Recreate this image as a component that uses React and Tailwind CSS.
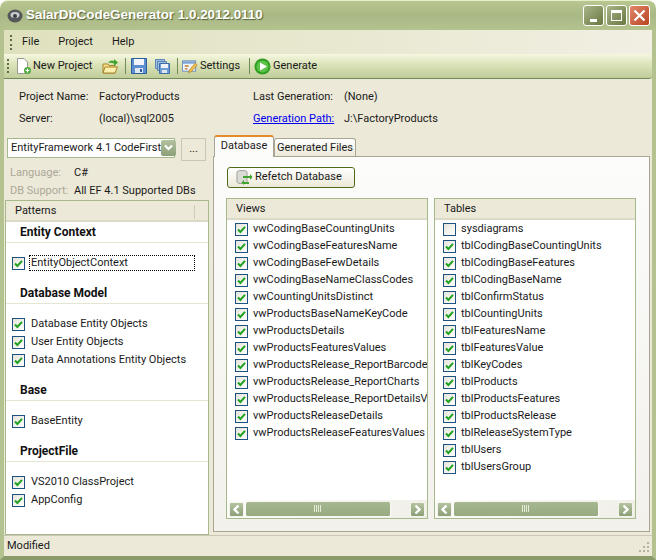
import React from "react";

const views = [
  "vwCodingBaseCountingUnits",
  "vwCodingBaseFeaturesName",
  "vwCodingBaseFewDetails",
  "vwCodingBaseNameClassCodes",
  "vwCountingUnitsDistinct",
  "vwProductsBaseNameKeyCode",
  "vwProductsDetails",
  "vwProductsFeaturesValues",
  "vwProductsRelease_ReportBarcode",
  "vwProductsRelease_ReportCharts",
  "vwProductsRelease_ReportDetailsView",
  "vwProductsReleaseDetails",
  "vwProductsReleaseFeaturesValues",
];

const tables = [
  "tblCodingBaseCountingUnits",
  "tblCodingBaseFeatures",
  "tblCodingBaseName",
  "tblConfirmStatus",
  "tblCountingUnits",
  "tblFeaturesName",
  "tblFeaturesValue",
  "tblKeyCodes",
  "tblProducts",
  "tblProductsFeatures",
  "tblProductsRelease",
  "tblReleaseSystemType",
  "tblUsers",
  "tblUsersGroup",
];

function Check({ checked = true }) {
  return (
    <span className="flex h-[13px] w-[13px] shrink-0 items-center justify-center border border-[#1c5180] bg-gradient-to-br from-[#e6e4da] to-[#ffffff]">
      {checked && (
        <svg width="9" height="9" viewBox="0 0 9 9">
          <path d="M1 4.5 L3.4 7 L8 1.8" fill="none" stroke="#21a121" strokeWidth="2" />
        </svg>
      )}
    </span>
  );
}

function Grip() {
  return (
    <span className="flex h-[15px] w-[3px] shrink-0 flex-col justify-between">
      <span className="h-[2px] w-[2px] bg-[#5f6b45]" />
      <span className="h-[2px] w-[2px] bg-[#5f6b45]" />
      <span className="h-[2px] w-[2px] bg-[#5f6b45]" />
      <span className="h-[2px] w-[2px] bg-[#5f6b45]" />
    </span>
  );
}

function Sep() {
  return <span className="block h-[16px] w-px shrink-0 bg-[#6f8a5b]" />;
}

function WinButton({ close, children }) {
  return (
    <span
      className={
        "flex h-[21px] w-[21px] items-center justify-center rounded-[3px] border border-white " +
        (close
          ? "bg-gradient-to-br from-[#e0876a] to-[#b8421d]"
          : "bg-gradient-to-br from-[#a9b68a] to-[#69773f]")
      }
    >
      {children}
    </span>
  );
}

function ScrollBtn({ dir }) {
  return (
    <span className="flex h-[15px] w-[15px] shrink-0 items-center justify-center rounded-[2px] border border-[#f4f4ec] bg-gradient-to-b from-[#b4c3a0] to-[#8ca078]">
      <svg width="9" height="11" viewBox="0 0 9 11">
        <path
          d={dir === "left" ? "M6.5 1.5 L2.5 5.5 L6.5 9.5" : "M2.5 1.5 L6.5 5.5 L2.5 9.5"}
          fill="none"
          stroke="#ffffff"
          strokeWidth="2.4"
        />
      </svg>
    </span>
  );
}

function ListPanel({ title, children }) {
  return (
    <div className="flex h-[321px] w-[202px] flex-col overflow-hidden border border-[#a5b98d] bg-white">
      <div className="flex h-[21px] shrink-0 items-center border-b-2 border-[#dcd9c6] bg-[#ece9d8] pl-[9px] pt-px">
        {title}
      </div>
      <div className="min-h-0 flex-1 overflow-hidden pl-[8px] pt-px">{children}</div>
      <div className="flex h-[18px] shrink-0 items-center gap-[2px] bg-gradient-to-r from-[#fbfbf8] to-[#f0efe8] px-[2px]">
        <ScrollBtn dir="left" />
        <span className="flex h-[15px] w-[145px] items-center justify-center rounded-[2px] border-b border-r border-[#f8f8f0] bg-gradient-to-b from-[#a6b78f] to-[#97aa80]">
          <span className="h-[7px] w-[8px] bg-[repeating-linear-gradient(90deg,#e6ecd8_0,#e6ecd8_1px,transparent_1px,transparent_2px)]" />
        </span>
        <span className="flex-1" />
        <ScrollBtn dir="right" />
      </div>
    </div>
  );
}

function Row({ label, checked = true }) {
  return (
    <div className="flex h-[17px] items-center gap-[5px] whitespace-nowrap">
      <Check checked={checked} />
      <span>{label}</span>
    </div>
  );
}

function Section({ title, items, focusFirst }) {
  return (
    <div className="pb-[11px]">
      <div className="flex h-[21px] items-center border-b border-[#e4e6d2] pl-[14px] text-[12px] font-bold text-[#111]">
        {title}
      </div>
      <div className="pt-[11px]">
        {items.map((it) => (
          <div key={it} className="flex h-[18px] items-center gap-[4px] pl-[6px]">
            <Check />
            <span className={focusFirst ? "w-[166px] border border-dotted border-black pl-[1px] leading-[14px]" : "pl-[2px]"}>
              {it}
            </span>
          </div>
        ))}
      </div>
    </div>
  );
}

export default function App() {
  return (
    <div className="flex h-[560px] w-[656px] flex-col overflow-hidden rounded-t-[8px] bg-[#ece9d8] font-['Roboto',sans-serif] text-[11px] text-[#1a1a1a]">
      {/* title bar */}
      <div className="flex h-[30px] shrink-0 items-center rounded-t-[8px] border-t border-[#e8efc8] bg-gradient-to-b from-[#b8c690] via-[#a9b985] to-[#b4c28e] pl-[7px] pr-[6px]">
        <svg width="16" height="16" viewBox="0 0 16 16" className="shrink-0">
          <ellipse cx="8" cy="8" rx="7.5" ry="6.5" fill="#55585a" />
          <ellipse cx="8" cy="7" rx="4.5" ry="3" fill="#c9cdd0" />
          <circle cx="8" cy="8" r="2" fill="#3b3d3f" />
        </svg>
        <span className="ml-[3px] flex-1 font-['Liberation_Sans',sans-serif] text-[13.4px] font-bold text-white [text-shadow:1px_1px_1px_#55603a]">
          SalarDbCodeGenerator 1.0.2012.0110
        </span>
        <div className="flex gap-[2px]">
          <WinButton>
            <span className="mt-[9px] h-[3px] w-[7px] bg-white" />
          </WinButton>
          <WinButton>
            <span className="h-[11px] w-[11px] border border-t-[3px] border-white" />
          </WinButton>
          <WinButton close>
            <svg width="13" height="13" viewBox="0 0 13 13">
              <path d="M1.5 1.5 L11.5 11.5 M11.5 1.5 L1.5 11.5" stroke="#fff" strokeWidth="2.2" />
            </svg>
          </WinButton>
        </div>
      </div>

      <div className="flex min-h-0 flex-1 flex-col border-x-4 border-b-4 border-x-[#b3c28f] border-b-[#8a9a68]">
        {/* menu */}
        <div className="flex h-[24px] shrink-0 items-center bg-gradient-to-r from-[#dfe1bd] to-[#f1efe3] pl-[6px] pt-px">
          <Grip />
          <span className="ml-[9px]">File</span>
          <span className="ml-[19px]">Project</span>
          <span className="ml-[19px]">Help</span>
        </div>

        {/* toolbar */}
        <div className="flex h-[25px] shrink-0 items-center rounded-r-[3px] border-b border-[#6f8a5b] bg-gradient-to-b from-[#f6f8e0] via-[#d8e0b4] to-[#c0cd9a] pl-[3px]">
          <Grip />
          <svg width="16" height="18" viewBox="0 0 16 18" className="ml-[6px] shrink-0">
            <path d="M1.5 1.5 H8 L11.5 5 V16.5 H1.5 Z" fill="#fff" stroke="#9a9a94" />
            <circle cx="11.5" cy="13.5" r="3.5" fill="#4da83a" />
            <path d="M9.5 13.5 H13.5 M11.5 11.5 V15.5" stroke="#fff" strokeWidth="1.2" />
          </svg>
          <span className="ml-[1px] w-[59px] whitespace-nowrap">New Project</span>
          <svg width="17" height="17" viewBox="0 0 17 17" className="ml-[10px] shrink-0">
            <path d="M1 15 V6 H6 L7 7.5 H13 V15 Z" fill="#f9e08a" stroke="#a6842a" />
            <path d="M1 15 L3 9 H15.5 L13 15 Z" fill="#fcefae" stroke="#a6842a" />
            <path d="M6 5 C8 2 10 2 12 3 L12 1 L16 4.5 L12 8 L12 5.5 C10 4.5 8 4.5 6 5 Z" fill="#3fa52e" />
          </svg>
          <span className="ml-[6px]"><Sep /></span>
          <svg width="16" height="16" viewBox="0 0 16 16" className="ml-[5px] shrink-0">
            <path d="M0.5 0.5 H15.5 V15.5 H0.5 Z" fill="#5b8fd0" stroke="#2d5f9f" />
            <rect x="3" y="1" width="10" height="6" fill="#f2f6fb" />
            <rect x="4" y="10" width="8" height="5" fill="#dfe8f2" />
            <rect x="9" y="11" width="2" height="3" fill="#2d5f9f" />
          </svg>
          <svg width="15" height="15" viewBox="0 0 15 15" className="ml-[8px] shrink-0">
            <path d="M0.5 0.5 H9.5 V9.5 H0.5 Z" fill="#9dbce0" stroke="#5c86b8" />
            <path d="M2.5 2.5 H11.5 V11.5 H2.5 Z" fill="#9dbce0" stroke="#5c86b8" />
            <path d="M4.5 4.5 H14.5 V14.5 H4.5 Z" fill="#6f9cd3" stroke="#3d6ea8" />
            <rect x="6" y="5" width="7" height="4" fill="#eef3f9" />
            <rect x="7" y="11" width="5" height="3" fill="#dfe8f2" />
          </svg>
          <span className="ml-[7px]"><Sep /></span>
          <svg width="16" height="17" viewBox="0 0 17 17" className="ml-[4px] shrink-0">
            <rect x="0.5" y="2.5" width="14" height="11" fill="#eef3fa" stroke="#6d8fb8" />
            <rect x="1" y="3" width="13" height="2.5" fill="#7da3d4" />
            <path d="M3 8 H7 M3 11 H6" stroke="#c2792d" strokeWidth="1.4" />
            <path d="M7 15 L8 12 L14 5 L16 7 L10 14 Z" fill="#f2c14e" stroke="#a87a22" strokeWidth="0.7" />
          </svg>
          <span className="ml-[2px] w-[41px]">Settings</span>
          <span className="ml-[8px]"><Sep /></span>
          <svg width="17" height="17" viewBox="0 0 17 17" className="ml-[4px] shrink-0">
            <circle cx="8.5" cy="8.5" r="8" fill="#2f9e22" />
            <circle cx="8.5" cy="8.5" r="6" fill="#5cc24a" />
            <path d="M6 4.5 L13 8.5 L6 12.5 Z" fill="#fff" />
          </svg>
          <span className="ml-[2px]">Generate</span>
        </div>

        {/* project info */}
        <div className="h-[56px] shrink-0 pt-[7px]">
          <div className="flex h-[22px] items-center pl-[15px]">
            <span className="w-[80px]">Project Name:</span>
            <span className="w-[154px]">FactoryProducts</span>
            <span className="w-[91px]">Last Generation:</span>
            <span>(None)</span>
          </div>
          <div className="flex h-[22px] items-center pl-[15px]">
            <span className="w-[80px]">Server:</span>
            <span className="w-[154px]">(local)\sql2005</span>
            <span className="w-[91px]">
              <span className="text-[#0000ee] underline">Generation Path:</span>
            </span>
            <span>J:\FactoryProducts</span>
          </div>
        </div>

        {/* main */}
        <div className="flex min-h-0 flex-1">
          <div className="flex w-[205px] shrink-0 flex-col">
            <div className="h-[65px] shrink-0 pl-[3px] pt-[3px]">
              <div className="flex items-start">
                <div className="flex h-[20px] w-[168px] items-center justify-between border border-[#a5b98d] bg-white pl-[3px] pr-[1px]">
                  <span className="whitespace-nowrap">EntityFramework 4.1 CodeFirst</span>
                  <span className="flex h-[16px] w-[15px] shrink-0 items-center justify-center rounded-[2px] bg-gradient-to-b from-[#b4c3a0] to-[#8ca078]">
                    <svg width="9" height="8" viewBox="0 0 9 8">
                      <path d="M1 1.5 L4.5 5 L8 1.5" fill="none" stroke="#fff" strokeWidth="2.2" />
                    </svg>
                  </span>
                </div>
                <div className="ml-[6px] flex h-[23px] w-[25px] items-center justify-center border border-[#c9c6b4] bg-[#ece9d8]">
                  ...
                </div>
              </div>
              <div className="mt-[3px] flex h-[18px] items-center pl-[3px]">
                <span className="w-[64px] text-[#aca899]">Language:</span>
                <span>C#</span>
              </div>
              <div className="flex h-[18px] items-center pl-[3px]">
                <span className="w-[64px] whitespace-nowrap text-[#aca899]">DB Support:</span>
                <span className="whitespace-nowrap">All EF 4.1 Supported DBs</span>
              </div>
            </div>
            <div className="ml-px min-h-0 flex-1 overflow-hidden border border-[#a5b98d] bg-white">
              <div className="flex h-[21px] items-center border-b-2 border-[#dcd9c6] bg-[#ece9d8] pl-[9px] pt-[2px]">
                <span className="w-[179px]">Patterns</span>
                <span className="h-[14px] w-px bg-[#cfccb8]" />
              </div>
              <Section title="Entity Context" items={["EntityObjectContext"]} focusFirst />
              <Section
                title="Database Model"
                items={["Database Entity Objects", "User Entity Objects", "Data Annotations Entity Objects"]}
              />
              <Section title="Base" items={["BaseEntity"]} />
              <Section title="ProjectFile" items={["VS2010 ClassProject", "AppConfig"]} />
            </div>
          </div>

          {/* tabs */}
          <div className="ml-[4px] flex w-[437px] shrink-0 flex-col pb-[3px]">
            <div className="flex h-[21px] shrink-0 items-end pl-px">
              <div className="z-10 -mb-px flex h-[22px] w-[60px] items-center justify-center rounded-t-[3px] border-x border-t-2 border-x-[#a8a594] border-t-[#e68b2c] bg-[#fcfcfa] pb-[2px]">
                Database
              </div>
              <div className="flex h-[18px] w-[82px] items-center justify-center whitespace-nowrap rounded-t-[3px] border border-b-0 border-[#a8a594] bg-gradient-to-b from-white to-[#ece9d8] pt-px">
                Generated Files
              </div>
            </div>
            <div className="min-h-0 flex-1 border border-[#a8a594] bg-gradient-to-b from-[#fcfcfb] to-[#f2f1ec] pl-[12px] pt-[10px]">
              <div className="ml-px flex h-[21px] w-[128px] items-center gap-[2px] rounded-[3px] border border-[#4f6b1a] bg-gradient-to-b from-white to-[#ece9d8] pl-[8px]">
                <svg width="17" height="17" viewBox="0 0 17 17" className="shrink-0">
                  <path d="M1 3 C1 1 11 1 11 3 V13 C11 15 1 15 1 13 Z" fill="#dcdcd6" stroke="#a0a09a" />
                  <path d="M7 7 H14 V5 L16.5 8 L14 11 V9 H7 Z" fill="#3fa52e" />
                  <path d="M13 13 H8 V11 L5.5 13.5 L8 16 V15 H13 Z" fill="#3fa52e" />
                </svg>
                <span>Refetch Database</span>
              </div>
              <div className="mt-[10px] flex gap-[6px]">
                <ListPanel title="Views">
                  {views.map((v) => (
                    <Row key={v} label={v} />
                  ))}
                </ListPanel>
                <ListPanel title="Tables">
                  <Row label="sysdiagrams" checked={false} />
                  {tables.map((t) => (
                    <Row key={t} label={t} />
                  ))}
                </ListPanel>
              </div>
            </div>
          </div>
        </div>

        {/* status */}
        <div className="flex h-[21px] shrink-0 items-center justify-between border-t border-[#c9c6b4] bg-[#ece9d8] pl-[3px] pr-[2px] pt-px">
          <span>Modified</span>
          <svg width="11" height="11" viewBox="0 0 11 11">
            <path d="M8 1h2v2H8zM4 5h2v2H4zM8 5h2v2H8zM0 9h2v2H0zM4 9h2v2H4zM8 9h2v2H8z" fill="#b5b29f" />
          </svg>
        </div>
      </div>
    </div>
  );
}
